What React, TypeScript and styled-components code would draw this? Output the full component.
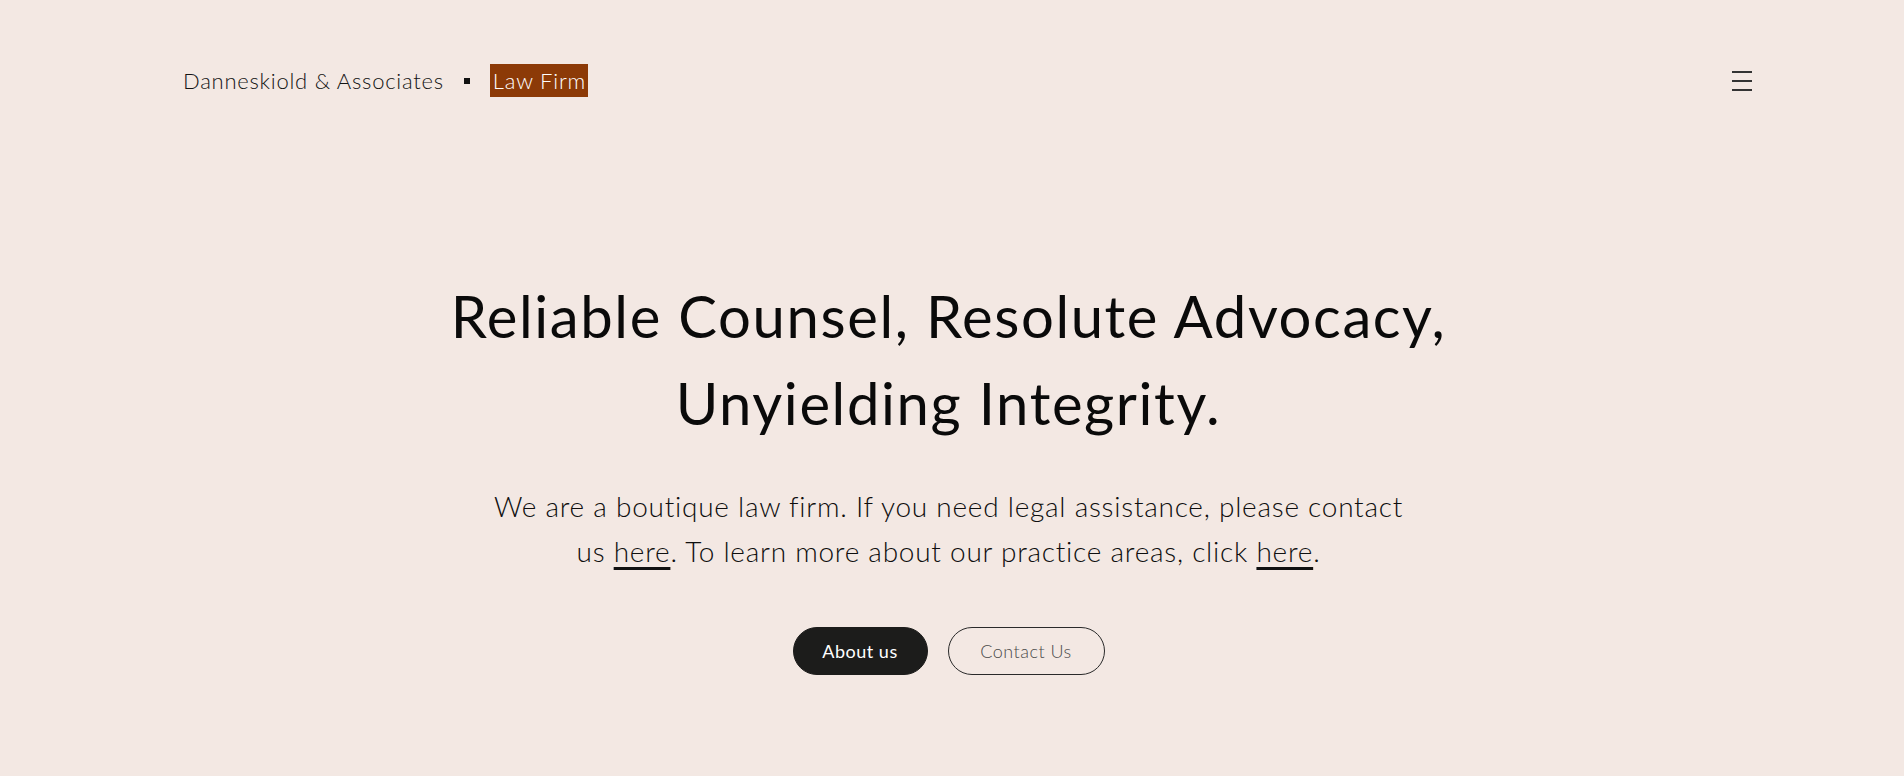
import React from "react";
import styled, { createGlobalStyle } from "styled-components";

const Global = createGlobalStyle`
  html, body {
    margin: 0;
    background: #f3e8e3;
  }
  body {
    font-family: "Lato", "Open Sans", sans-serif;
    color: #1a1a1a;
  }
`;

const Page = styled.div`
  min-height: 5400px;
  padding-right: 7px;
  display: flex;
  flex-direction: column;
  background: #f3e8e3;
`;

const Header = styled.header`
  display: flex;
  align-items: center;
  justify-content: space-between;
  padding: 64px 145px 0 183px;
  height: 33px;
`;

const Brand = styled.div`
  display: flex;
  align-items: center;
  gap: 20px;
`;

const BrandName = styled.span`
  font-size: 22px;
  font-weight: 300;
  color: #141414;
  letter-spacing: 0.75px;
`;

const Dot = styled.span`
  width: 6px;
  height: 6px;
  background: #111;
  display: block;
`;

const Badge = styled.span`
  background: #8c3a07;
  color: #ffffff;
  font-size: 22px;
  font-weight: 300;
  letter-spacing: 0.8px;
  height: 33px;
  padding: 0 2px 0 3px;
  display: flex;
  align-items: center;
`;

const Burger = styled.button`
  width: 20px;
  height: 22px;
  padding: 1px 0;
  border: 0;
  background: transparent;
  display: flex;
  flex-direction: column;
  justify-content: space-between;
  cursor: pointer;
`;

const BurgerLine = styled.span`
  display: block;
  height: 2px;
  width: 20px;
  background: #333;
`;

const Hero = styled.section`
  display: flex;
  flex-direction: column;
  align-items: center;
  text-align: center;
  padding-top: 175px;
`;

const Title = styled.h1`
  margin: 0;
  font-size: 58px;
  line-height: 87px;
  font-weight: 400;
  color: #0a0a0a;
  letter-spacing: 1.6px;
`;

const Lead = styled.p`
  margin: 38px 0 0;
  font-size: 28px;
  line-height: 45px;
  font-weight: 300;
  color: #0e0e0e;
  letter-spacing: 0.75px;
`;

const Link = styled.a`
  color: #111;
  text-decoration: underline;
  text-decoration-thickness: 3px;
  text-underline-offset: 5px;
`;

const Actions = styled.div`
  display: flex;
  gap: 20px;
  margin-top: 53px;
`;

const Pill = styled.a<{ $solid?: boolean }>`
  display: flex;
  align-items: center;
  justify-content: center;
  height: 48px;
  box-sizing: border-box;
  border-radius: 999px;
  font-size: 18px;
  text-decoration: none;
  letter-spacing: 0.5px;
  width: ${(p) => (p.$solid ? "135px" : "157px")};
  font-weight: ${(p) => (p.$solid ? 400 : 300)};
  background: ${(p) => (p.$solid ? "#1c1c1b" : "transparent")};
  color: ${(p) => (p.$solid ? "#ffffff" : "#4a4a4a")};
  border: 1px solid ${(p) => (p.$solid ? "#1c1c1b" : "#2a2a2a")};
`;

export default function App() {
  return (
    <Page>
      <Global />
      <Header>
        <Brand>
          <BrandName>Danneskiold &amp; Associates</BrandName>
          <Dot />
          <Badge>Law Firm</Badge>
        </Brand>
        <Burger aria-label="Menu">
          <BurgerLine />
          <BurgerLine />
          <BurgerLine />
        </Burger>
      </Header>
      <Hero>
        <Title>
          Reliable Counsel, Resolute Advocacy,
          <br />
          Unyielding Integrity.
        </Title>
        <Lead>
          We are a boutique law firm. If you need legal assistance, please contact
          <br />
          us <Link href="#contact">here</Link>. To learn more about our practice areas, click{" "}
          <Link href="#practice">here</Link>.
        </Lead>
        <Actions>
          <Pill $solid href="#about">About us</Pill>
          <Pill href="#contact">Contact Us</Pill>
        </Actions>
      </Hero>
    </Page>
  );
}
